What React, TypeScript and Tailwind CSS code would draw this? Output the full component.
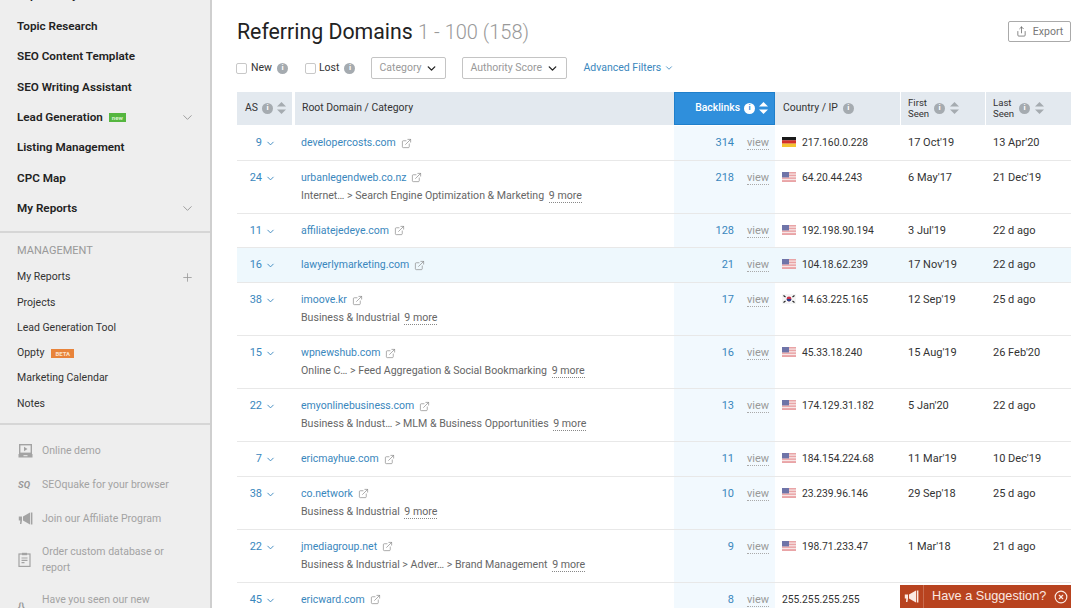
import { ChevronDown, ExternalLink, Plus, Share, CircleX } from 'lucide-react';

const font = "font-['Roboto',sans-serif]";

function InfoDot({ light }: { light?: boolean }) {
  return (
    <span className={`inline-flex w-[11px] h-[11px] rounded-full items-center justify-center text-[8px] font-bold leading-none ${light ? 'bg-white text-[#2f8fdc]' : 'bg-[#a5abb0] text-white'}`}>
      i
    </span>
  );
}

function Sort({ light }: { light?: boolean }) {
  const color = light ? 'fill-white' : 'fill-[#a5abb0]';
  return (
    <svg width="9" height="12" viewBox="0 0 9 12" className={color}>
      <path d="M4.5 0 L9 4.5 H0 Z" />
      <path d="M4.5 12 L9 7.5 H0 Z" />
    </svg>
  );
}

function Flag({ code }: { code: string }) {
  if (code === 'de') {
    return (
      <svg width="14" height="10" viewBox="0 0 14 10">
        <rect width="14" height="3.4" fill="#1a1a1a" />
        <rect y="3.3" width="14" height="3.4" fill="#d4312a" />
        <rect y="6.6" width="14" height="3.4" fill="#f4c430" />
      </svg>
    );
  }
  if (code === 'kr') {
    return (
      <svg width="14" height="10" viewBox="0 0 14 10">
        <rect width="14" height="10" fill="#f5f5f5" />
        <circle cx="7" cy="5" r="2.4" fill="#c9344a" />
        <path d="M4.6 5a2.4 2.4 0 0 0 4.8 0z" fill="#27408b" />
        <path d="M1.5 1.5l2 1.5M1.5 8.5l2-1.5M12.5 1.5l-2 1.5M12.5 8.5l-2-1.5" stroke="#222" strokeWidth="1.1" />
      </svg>
    );
  }
  return (
    <svg width="14" height="10" viewBox="0 0 14 10">
      <rect width="14" height="10" fill="#e9a4a6" />
      <rect y="1.5" width="14" height="1.2" fill="#f7e6e6" />
      <rect y="4.2" width="14" height="1.2" fill="#f7e6e6" />
      <rect y="6.9" width="14" height="1.2" fill="#f7e6e6" />
      <rect width="7" height="5.4" fill="#6f74a8" />
    </svg>
  );
}

function LaptopPlay() {
  return (
    <svg width="15" height="14" viewBox="0 0 15 14" className="shrink-0">
      <rect x="1.7" y="0.7" width="11.6" height="8.6" fill="none" stroke="#a3a3a3" strokeWidth="1.4" />
      <path d="M6 2.8 L9.5 5 L6 7.2 Z" fill="#a3a3a3" />
      <path d="M0.5 10 H14.5 V13.5 H0.5 Z" fill="#a3a3a3" />
      <rect x="5.5" y="11.2" width="4" height="1" fill="#eeeeee" />
    </svg>
  );
}

function Bullhorn({ color }: { color: string }) {
  return (
    <svg width="15" height="13" viewBox="0 0 15 13" fill={color} className="shrink-0">
      <path d="M5 4.5 L12 0.5 V12.5 L5 8.5 Z" />
      <rect x="12.8" y="0.5" width="1.6" height="12" />
      <path d="M0.8 4.5 H4 V8.5 L3.4 12 H2 L2.3 8.5 H0.8 Z" />
    </svg>
  );
}

function Clipboard() {
  return (
    <svg width="13" height="15" viewBox="0 0 13 15" fill="none" stroke="#a3a3a3" strokeWidth="1.2" className="shrink-0">
      <rect x="1" y="2" width="11" height="12.4" />
      <rect x="4" y="0.8" width="5" height="2.4" fill="#a3a3a3" stroke="none" />
      <path d="M3.5 6 H9.5 M3.5 8.3 H9.5 M3.5 10.6 H6.5" />
    </svg>
  );
}

type Row = {
  as: number;
  domain: string;
  cat?: string;
  links: number;
  flag: string;
  ip: string;
  first: string;
  last: string;
  hl?: boolean;
};

const rows: Row[] = [
  { as: 9, domain: 'developercosts.com', links: 314, flag: 'de', ip: '217.160.0.228', first: "17 Oct'19", last: "13 Apr'20" },
  { as: 24, domain: 'urbanlegendweb.co.nz', cat: 'Internet… > Search Engine Optimization & Marketing', links: 218, flag: 'us', ip: '64.20.44.243', first: "6 May'17", last: "21 Dec'19" },
  { as: 11, domain: 'affiliatejedeye.com', links: 128, flag: 'us', ip: '192.198.90.194', first: "3 Jul'19", last: '22 d ago' },
  { as: 16, domain: 'lawyerlymarketing.com', links: 21, flag: 'us', ip: '104.18.62.239', first: "17 Nov'19", last: '22 d ago', hl: true },
  { as: 38, domain: 'imoove.kr', cat: 'Business & Industrial', links: 17, flag: 'kr', ip: '14.63.225.165', first: "12 Sep'19", last: '25 d ago' },
  { as: 15, domain: 'wpnewshub.com', cat: 'Online C… > Feed Aggregation & Social Bookmarking', links: 16, flag: 'us', ip: '45.33.18.240', first: "15 Aug'19", last: "26 Feb'20" },
  { as: 22, domain: 'emyonlinebusiness.com', cat: 'Business & Indust… > MLM & Business Opportunities', links: 13, flag: 'us', ip: '174.129.31.182', first: "5 Jan'20", last: '22 d ago' },
  { as: 7, domain: 'ericmayhue.com', links: 11, flag: 'us', ip: '184.154.224.68', first: "11 Mar'19", last: "10 Dec'19" },
  { as: 38, domain: 'co.network', cat: 'Business & Industrial', links: 10, flag: 'us', ip: '23.239.96.146', first: "29 Sep'18", last: '25 d ago' },
  { as: 22, domain: 'jmediagroup.net', cat: 'Business & Industrial > Adver… > Brand Management', links: 9, flag: 'us', ip: '198.71.233.47', first: "1 Mar'18", last: '21 d ago' },
  { as: 45, domain: 'ericward.com', links: 8, flag: '', ip: '255.255.255.255', first: '', last: '' },
];

const mainNav = [
  { label: 'Topic Analysis' },
  { label: 'Topic Research' },
  { label: 'SEO Content Template' },
  { label: 'SEO Writing Assistant' },
  { label: 'Lead Generation', badge: true, chevron: true },
  { label: 'Listing Management' },
  { label: 'CPC Map' },
  { label: 'My Reports', chevron: true },
];

const colsClass = 'grid grid-cols-[58px_379px_101px_126px_85px_85px]';

function Sidebar() {
  return (
    <aside className="w-[212px] h-[608px] shrink-0 bg-[#eeeeee] border-r-2 border-[#cfcfcf] overflow-hidden">
      <div className="-mt-[19px] flex flex-col pl-[17px] pr-[15px] pb-[6.4px]">
        {mainNav.map((item) => (
          <div key={item.label} className="h-[30.4px] flex items-center justify-between text-[11.7px] font-semibold text-[#222]">
            <span className="flex items-center gap-[6px]">
              {item.label}
              {item.badge && (
                <span className="bg-[#55b63f] text-[#d8f3ce] text-[6px] leading-[9px] px-[3px] h-[9px] font-bold">new</span>
              )}
            </span>
            {item.chevron && <ChevronDown size={15} strokeWidth={1.5} className="text-[#999]" />}
          </div>
        ))}
      </div>
      <div className="border-t-2 border-[#d6d6d6] pl-[17px] pr-[16.5px] pt-[10px] pb-[7px]">
        <div className="text-[11px] text-[#999] h-[16px] leading-[16px]">MANAGEMENT</div>
        <div className="flex flex-col mt-[6px] text-[10.5px] text-[#333]">
          <div className="h-[25.3px] flex items-center justify-between">
            My Reports
            <Plus size={13} strokeWidth={1.5} className="text-[#999]" />
          </div>
          <div className="h-[25.3px] flex items-center">Projects</div>
          <div className="h-[25.3px] flex items-center">Lead Generation Tool</div>
          <div className="h-[25.3px] flex items-center gap-[7px]">
            Oppty
            <span className="bg-[#e8833a] text-[#fbe0c8] text-[6px] leading-[9px] px-[4px] h-[9px] font-bold">BETA</span>
          </div>
          <div className="h-[25.3px] flex items-center">Marketing Calendar</div>
          <div className="h-[25.3px] flex items-center">Notes</div>
        </div>
      </div>
      <div className="border-t-2 border-[#d6d6d6] pl-[18px] pr-[17px] pt-[9px] text-[10.5px] text-[#a3a3a3]">
        <div className="h-[33.7px] flex items-center gap-[9px]">
          <LaptopPlay />
          <span>Online demo</span>
        </div>
        <div className="h-[33.7px] flex items-center gap-[9px]">
          <span className="w-[15px] text-[9.5px] font-bold italic text-[#999]">SQ</span>
          <span>SEOquake for your browser</span>
        </div>
        <div className="h-[33.7px] flex items-center gap-[9px]">
          <Bullhorn color="#a3a3a3" />
          <span>Join our Affiliate Program</span>
        </div>
        <div className="h-[49px] flex items-center gap-[11px]">
          <Clipboard />
          <span className="leading-[16px] w-[130px]">Order custom database or report</span>
        </div>
        <div className="flex items-start gap-[9px] mt-[8px]">
          <span className="w-[15px] text-[10px] font-bold text-[#999] mt-[8px]">{'{}'}</span>
          <span className="leading-[16px] w-[130px]">Have you seen our new</span>
        </div>
      </div>
    </aside>
  );
}

function Toolbar() {
  return (
    <div className="flex items-center h-[24px] mt-[13px] text-[10.5px] text-[#333] whitespace-nowrap">
      <span className="w-[11px] h-[11px] border border-[#c8c8c8] rounded-[2px] bg-white -ml-[1px]" />
      <span className="ml-[4px]">New</span>
      <span className="ml-[5px] flex"><InfoDot /></span>
      <span className="ml-[17px] w-[11px] h-[11px] border border-[#c8c8c8] rounded-[2px] bg-white" />
      <span className="ml-[3px]">Lost</span>
      <span className="ml-[5px] flex"><InfoDot /></span>
      <div className="ml-[16px] w-[75px] h-[22px] border border-[#c4c4c4] rounded-[2px] flex items-center justify-between px-[7px] text-[#999]">
        Category
        <ChevronDown size={13} strokeWidth={2.5} className="text-[#222]" />
      </div>
      <div className="ml-[16px] w-[105px] h-[22px] border border-[#c4c4c4] rounded-[2px] flex items-center justify-between px-[7px] text-[#999]">
        Authority Score
        <ChevronDown size={13} strokeWidth={2.5} className="text-[#222]" />
      </div>
      <span className="ml-[16px] text-[#3a87bd] flex items-center gap-[3px]">
        Advanced Filters
        <ChevronDown size={10} strokeWidth={2} />
      </span>
    </div>
  );
}

function TableHead() {
  return (
    <div className={`${colsClass} h-[32.5px] mb-[1.5px] text-[10.4px] text-[#333]`}>
      <div className="bg-[#e3e9ef] mr-[3px] flex items-center pl-[8px] gap-[4px]">
        AS <InfoDot /> <Sort />
      </div>
      <div className="bg-[#e3e9ef] flex items-center pl-[7px]">Root Domain / Category</div>
      <div className="bg-[#2f8fdc] border border-[#1f7fcb] text-white font-medium flex items-center justify-end pr-[6px] gap-[4px]">
        Backlinks <InfoDot light /> <Sort light />
      </div>
      <div className="bg-[#e3e9ef] mr-[1px] flex items-center pl-[8px] gap-[5px]">
        Country / IP <InfoDot />
      </div>
      <div className="bg-[#e3e9ef] mr-[1px] flex items-center pl-[7px] gap-[5px]">
        <span className="leading-[11px] text-[9.6px]">First<br />Seen</span> <InfoDot /> <Sort />
      </div>
      <div className="bg-[#e3e9ef] flex items-center pl-[7px] gap-[5px]">
        <span className="leading-[11px] text-[9.6px]">Last<br />Seen</span> <InfoDot /> <Sort />
      </div>
    </div>
  );
}

function TableRow({ row }: { row: Row }) {
  return (
    <div className={`${colsClass} border-b border-[#e8e8e8] text-[11px] text-[#333] ${row.hl ? 'bg-[#eef8fd]' : ''} ${row.cat ? 'h-[53px]' : 'h-[34.7px]'}`}>
      <div className="flex justify-end items-start pt-[10px] pr-[19px] text-[#3a87bd] gap-[3px] leading-[14px]">
        {row.as}
        <ChevronDown size={11} strokeWidth={2} className="mt-[2px]" />
      </div>
      <div className="pl-[6px] pt-[10px]">
        <div className="flex items-center gap-[5px] leading-[14px] text-[10.5px] text-[#3a87bd]">
          {row.domain}
          <ExternalLink size={11} strokeWidth={1.5} className="text-[#888]" />
        </div>
        {row.cat && (
          <div className="mt-[4px] leading-[14px] text-[10.6px] text-[#666]">
            {row.cat} <span className="ml-[2px] border-b border-dotted border-[#888]">9 more</span>
          </div>
        )}
      </div>
      <div className={`flex items-start justify-end pt-[10px] pr-[6px] leading-[14px] ${row.hl ? '' : 'bg-[#f2f9fe]'}`}>
        <span className="text-[#3a87bd]">{row.links}</span>
        <span className="ml-[13px] w-[22px] text-[#999] border-b border-dotted border-[#aaa] leading-[12px] mt-[1px]">view</span>
      </div>
      <div className="flex items-start pl-[7px] pt-[10px] leading-[14px] gap-[6px] text-[10.3px]">
        {row.flag && <span className="mt-[1px] flex"><Flag code={row.flag} /></span>}
        <span>{row.ip}</span>
      </div>
      <div className="pl-[7px] pt-[10px] leading-[14px]">{row.first}</div>
      <div className="pl-[7px] pt-[10px] leading-[14px]">{row.last}</div>
    </div>
  );
}

export default function App() {
  return (
    <div className={`relative flex w-[1080px] h-[608px] overflow-hidden bg-white ${font}`}>
      <Sidebar />
      <main className="flex-1 pl-[25px] pr-[9px] pt-[21px] min-w-0">
        <div className="flex items-start justify-between w-[834px]">
          <h1 className="text-[21.3px] leading-[22px] text-[#222]">
            Referring Domains <span className="text-[20px] text-[#999] font-light">1 - 100 (158)</span>
          </h1>
          <div className="w-[63px] h-[21px] border border-[#aaa] rounded-[2px] flex items-center justify-center gap-[6px] text-[10.5px] text-[#777]">
            <Share size={11} strokeWidth={1.5} className="text-[#555]" />
            Export
          </div>
        </div>
        <Toolbar />
        <div className="mt-[12px] w-[834px]">
          <TableHead />
          {rows.map((row) => (
            <TableRow key={row.domain} row={row} />
          ))}
        </div>
      </main>
      <div className="absolute left-[900px] top-[585px] w-[171px] h-[23px] bg-[#b8431f] flex items-center font-['Liberation_Sans',sans-serif] text-[#fbe9e2] text-[12.7px] whitespace-nowrap">
        <span className="w-[24px] h-full border-r border-[#c96b4d] flex items-center justify-center">
          <Bullhorn color="#fbe9e2" />
        </span>
        <span className="ml-[8px]">Have a Suggestion?</span>
        <CircleX size={14} strokeWidth={2} className="ml-[8px]" />
      </div>
    </div>
  );
}
